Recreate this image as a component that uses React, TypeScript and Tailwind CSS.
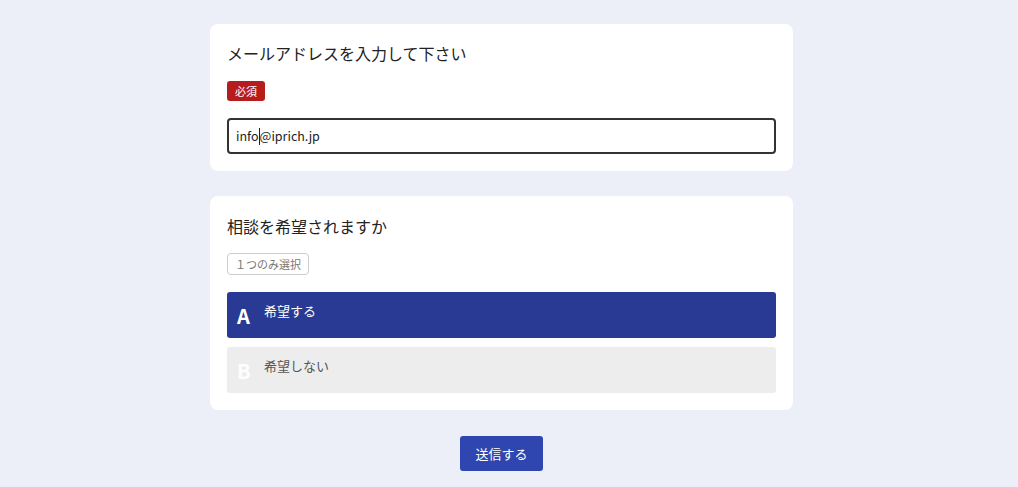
import React from 'react';

const font = { fontFamily: '"Noto Sans CJK JP", "Noto Sans", sans-serif' };

function Option({ letter, label, selected }: { letter: string; label: string; selected?: boolean }) {
  return (
    <div
      className={
        'flex h-[46px] items-start rounded-[3px] ' +
        (selected ? 'bg-[#283a93] text-white' : 'bg-[#ededed] text-[#555]')
      }
    >
      <div
        className={
          'w-[37px] pl-[10px] pt-[10px] text-[20px] font-bold leading-[28px] ' +
          (selected ? 'text-white' : 'text-white/90')
        }
      >
        {letter}
      </div>
      <div className="pt-[9px] text-[13px] leading-[20px]">{label}</div>
    </div>
  );
}

export default function App() {
  return (
    <div className="min-h-[487px] w-full bg-[#eceef8] pt-[24px]" style={font}>
      <div className="ml-[210px] flex w-[583px] flex-col">
        {/* email card */}
        <div className="rounded-[8px] bg-white px-[17px] pb-[17px] pt-[17px]">
          <div className="text-[16px] leading-[24px] text-[#222]">メールアドレスを入力して下さい</div>
          <div className="mt-[16px] flex">
            <span className="rounded-[3px] bg-[#b71c1c] px-[8px] text-[11px] leading-[20px] text-white">必須</span>
          </div>
          <div className="mt-[17px] flex h-[36px] items-center rounded-[4px] border-2 border-[#333] px-[7px] text-[12.5px] text-[#222]">
            info<span className="inline-block h-[17px] w-px bg-[#222]" />@iprich.jp
          </div>
        </div>

        {/* consultation card */}
        <div className="mt-[25px] rounded-[8px] bg-white px-[17px] pb-[17px] pt-[18px]">
          <div className="text-[16px] leading-[24px] text-[#222]">相談を希望されますか</div>
          <div className="mt-[15px] flex">
            <span className="rounded-[4px] border border-[#ccc] px-[7px] text-[11px] leading-[20px] text-[#777]">１つのみ選択</span>
          </div>
          <div className="mt-[17px] flex flex-col gap-[9px]">
            <Option letter="A" label="希望する" selected />
            <Option letter="B" label="希望しない" />
          </div>
        </div>

        <div className="mt-[26px] flex justify-center">
          <button className="h-[35px] w-[83px] rounded-[3px] bg-[#2f46b0] text-[13px] text-white">送信する</button>
        </div>
      </div>
    </div>
  );
}
